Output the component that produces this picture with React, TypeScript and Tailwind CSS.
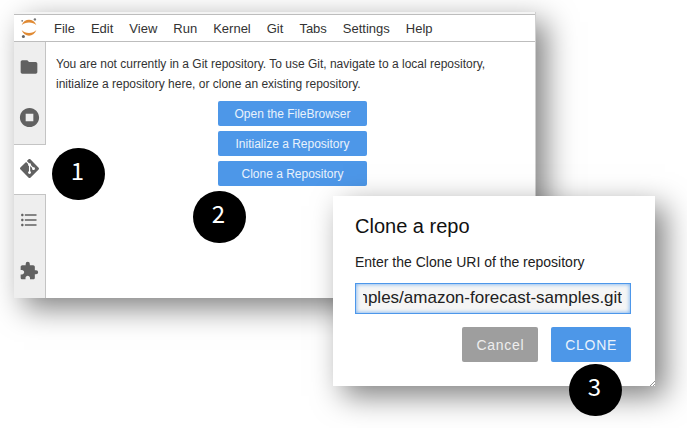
import { useEffect, useRef, useState } from "react"
import { MdExtension, MdFolder, MdFormatListBulleted, MdStopCircle } from "react-icons/md"
import { SiGit } from "react-icons/si"

const menus = ["File", "Edit", "View", "Run", "Kernel", "Git", "Tabs", "Settings", "Help"]

const sideTabs = [
  { id: "files", label: "File Browser", icon: <MdFolder className="h-5 w-5" /> },
  { id: "running", label: "Running Terminals and Kernels", icon: <MdStopCircle className="h-[23px] w-[23px]" /> },
  { id: "git", label: "Git", icon: <SiGit className="h-[19px] w-[19px]" /> },
  { id: "toc", label: "Table of Contents", icon: <MdFormatListBulleted className="h-5 w-5" /> },
  { id: "extensions", label: "Extension Manager", icon: <MdExtension className="h-5 w-5" /> },
]

const gitActions = ["Open the FileBrowser", "Initialize a Repository", "Clone a Repository"]

function JupyterLogo() {
  return (
    <svg viewBox="0 0 18 20" className="h-5 w-[18px]" aria-hidden="true">
      <path d="M1.6 7.2C3 3.4 6 1.7 9 1.7s6 1.7 7.4 5.5C14.6 5.3 12 4.5 9 4.5S3.4 5.3 1.6 7.2Z" fill="#e08a33" />
      <path d="M1.6 12C3 15.9 6 17.7 9 17.7s6-1.8 7.4-5.7C14.6 14 12 14.9 9 14.9S3.4 14 1.6 12Z" fill="#e08a33" />
      <circle cx="2.2" cy="2.8" r="0.9" fill="#767677" />
      <circle cx="14.9" cy="1.4" r="1.2" fill="#767677" />
      <circle cx="3.4" cy="18.4" r="1.5" fill="#616262" />
    </svg>
  )
}

function StepBadge({ step, className }: { step: number; className: string }) {
  return (
    <span
      className={`absolute z-20 flex h-[52px] w-[53px] items-center justify-center rounded-full bg-black pr-0.5 pb-2 font-['Noto_Sans_CJK_SC',sans-serif] text-2xl leading-6 text-white ${className}`}
    >
      {step}
    </span>
  )
}

function CloneDialog() {
  const [uri, setUri] = useState("https://github.com/aws-samples/amazon-forecast-samples.git")
  const inputRef = useRef<HTMLInputElement>(null)

  // keep the end of a long URI in view
  useEffect(() => {
    const el = inputRef.current
    if (el) el.scrollLeft = el.scrollWidth
  }, [uri])

  return (
    <form
      role="dialog"
      aria-labelledby="clone-title"
      onSubmit={(e) => e.preventDefault()}
      className="absolute top-[196px] right-8 left-[333px] z-10 bg-white pt-4 pr-6 pb-6 pl-[22px] shadow-[10px_10px_28px_rgba(0,0,0,0.5)]"
    >
      <h2 id="clone-title" className="text-xl leading-7 text-[#111111]">Clone a repo</h2>
      <label htmlFor="clone-uri" className="mt-3 block text-sm leading-5 text-[#212121]">
        Enter the Clone URI of the repository
      </label>
      <input
        id="clone-uri"
        ref={inputRef}
        value={uri}
        onChange={(e) => setUri(e.target.value)}
        className="mt-[11px] block h-[31px] w-full border border-[#4d97ea] bg-[#f5f5f5] pr-2 pb-0.5 pl-[7px] text-[17px] text-[#212121] shadow-[inset_0_0_4px_#64a6ef] outline-none"
      />
      <div className="mt-[13px] flex justify-end gap-[13px]">
        <button type="button" className="h-[35px] rounded-xs bg-[#9e9e9e] px-[14px] text-sm tracking-wider text-[#eeeeee]">
          Cancel
        </button>
        <button type="submit" className="h-[35px] rounded-xs bg-[#4d97e8] px-[14px] text-sm tracking-wider text-[#e9f2fc]">
          CLONE
        </button>
      </div>
      <svg viewBox="0 0 5 5" className="absolute right-0 bottom-0 h-[5px] w-[5px]" stroke="#777777" aria-hidden="true">
        <path d="M0 5 5 0M3 5 5 3" strokeWidth="0.8" />
      </svg>
    </form>
  )
}

export default function App() {
  const [active, setActive] = useState("git")

  return (
    <main className="relative min-h-screen overflow-hidden bg-white pt-3 pr-[151px] pb-8 pl-[14px] font-['Liberation_Sans',Arial,sans-serif]">
      <section className="border-r border-[#d0d0d0] bg-white shadow-[10px_10px_28px_rgba(0,0,0,0.5)]">
        <div className="h-0.5 bg-[#f4f4f4]" />
        <nav className="flex h-7 items-center border-y border-[#bdbdbd] pl-[6px]">
          <JupyterLogo />
          <div className="ml-2 flex pt-0.5">
            {menus.map((menu) => (
              <button key={menu} type="button" className="px-2 text-[13px] leading-5 text-[#333333]">
                {menu}
              </button>
            ))}
          </div>
        </nav>

        <div className="flex">
          <aside className="flex w-8 shrink-0 flex-col bg-[#eeeeee]">
            {sideTabs.map((tab) => (
              <button
                key={tab.id}
                type="button"
                aria-label={tab.label}
                onClick={() => setActive(tab.id)}
                className={
                  tab.id === active
                    ? "flex h-[51px] items-center justify-center border-y border-[#c4c4c4] bg-white pr-0.5 pb-0.5 text-[#616161]"
                    : "flex h-[51px] items-center justify-center border-r border-[#c4c4c4] pr-px pb-0.5 text-[#616161]"
                }
              >
                {tab.icon}
              </button>
            ))}
            <div className="h-px border-r border-[#c4c4c4]" />
          </aside>

          <div className="flex-1 pt-3 pr-[6px] pl-[10px]">
            <p className="text-xs leading-5 text-[#333333]">
              You are not currently in a Git repository. To use Git, navigate to a local repository,
              initialize a repository here, or clone an existing repository.
            </p>
            <div className="mx-auto mt-[7px] flex w-[149px] flex-col gap-[5px]">
              {gitActions.map((action) => (
                <button key={action} type="button" className="h-[25px] rounded-xs bg-[#4d97e8] text-xs leading-5 text-[#e9f2fc]">
                  {action}
                </button>
              ))}
            </div>
          </div>
        </div>
      </section>

      <CloneDialog />

      <StepBadge step={1} className="top-[148px] left-[52px]" />
      <StepBadge step={2} className="top-[191px] left-[193px]" />
      <StepBadge step={3} className="top-[364px] right-[65px]" />
    </main>
  )
}
